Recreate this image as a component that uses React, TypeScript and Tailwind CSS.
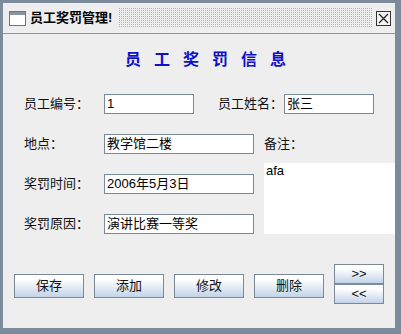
import React from "react";

const font = "font-['Liberation_Sans','Noto_Sans_CJK_SC',sans-serif]";

const Field = ({ value, width }: { value: string; width: string }) => (
  <div
    className={`${width} h-[20px] bg-white border border-[#7a8a99] pl-[2px] text-[13px] leading-[18px] text-black overflow-hidden whitespace-nowrap`}
  >
    {value}
  </div>
);

const Label = ({ text, width }: { text: string; width: string }) => (
  <div className={`${width} h-[20px] text-[13px] leading-[20px] text-[#111]`}>{text}</div>
);

const Btn = ({ text, h = "h-[24px]", w = "w-[70px]" }: { text: string; h?: string; w?: string }) => (
  <div
    className={`${w} ${h} flex items-center justify-center border border-[#7a8a99] bg-gradient-to-b from-white from-20% to-[#c3d3e8] text-[13px] text-[#111]`}
  >
    {text}
  </div>
);

const App = () => {
  return (
    <div className={`w-[401px] h-[334px] bg-[#7b8b9c] pt-[3px] pl-[3px] pr-[6px] pb-[6px] ${font}`}>
      <div className="w-full h-full flex flex-col bg-[#eeeeee]">
        {/* title bar */}
        <div className="h-[31px] flex items-center border-b border-[#8796a8] pl-[6px] pr-[3px]">
          <svg width="17" height="15" viewBox="0 0 17 15" className="mt-[1px]">
            <rect x="0.5" y="0.5" width="16" height="14" fill="#fff" stroke="#6b7583" />
            <rect x="1" y="1" width="15" height="3" fill="#8a95a3" />
          </svg>
          <div className="ml-[4px] text-[13px] font-bold text-black">员工奖罚管理!</div>
          <div className="ml-[6px] flex-1 h-[20px] bg-[conic-gradient(#b4b4b4_25%,transparent_0)] bg-size-[2px_2px]" />
          <div className="ml-[4px] mr-[1px] w-[15px] h-[15px] border-[1.5px] border-[#333] bg-[#f4f4f4] flex items-center justify-center">
            <svg width="11" height="11" viewBox="0 0 11 11">
              <path d="M1 1 L10 10 M10 1 L1 10" stroke="#222" strokeWidth="1.3" />
            </svg>
          </div>
        </div>

        {/* heading */}
        <div className="mt-[16px] h-[20px] pl-[122px] text-[16px] leading-[20px] font-bold text-[#1010cc] tracking-[13px] whitespace-nowrap">
          员工奖罚信息
        </div>

        {/* row 1 */}
        <div className="mt-[24px] flex pl-[21px]">
          <Label text="员工编号：" width="w-[80px]" />
          <Field value="1" width="w-[90px]" />
          <div className="ml-[24px] flex">
            <Label text="员工姓名：" width="w-[66px]" />
            <Field value="张三" width="w-[90px]" />
          </div>
        </div>

        {/* rows 2-4 */}
        <div className="mt-[20px] flex pl-[21px]">
          <div className="flex flex-col gap-[20px]">
            <div className="flex">
              <Label text="地点：" width="w-[80px]" />
              <Field value="教学馆二楼" width="w-[150px]" />
            </div>
            <div className="flex">
              <Label text="奖罚时间：" width="w-[80px]" />
              <Field value="2006年5月3日" width="w-[150px]" />
            </div>
            <div className="flex">
              <Label text="奖罚原因：" width="w-[80px]" />
              <Field value="演讲比赛一等奖" width="w-[150px]" />
            </div>
          </div>
          <div className="ml-[10px] flex flex-col flex-1">
            <Label text="备注：" width="w-[60px]" />
            <div className="mt-[9px] h-[71px] bg-white pl-[2px] text-[13px] leading-[16px] text-black">afa</div>
          </div>
        </div>

        {/* buttons */}
        <div className="mt-[30px] flex items-start pl-[11px]">
          <div className="mt-[10px] flex gap-[10px]">
            <Btn text="保存" />
            <Btn text="添加" />
            <Btn text="修改" />
            <Btn text="删除" />
          </div>
          <div className="ml-[10px] flex flex-col">
            <Btn text=">>" w="w-[50px]" h="h-[20px]" />
            <Btn text="<<" w="w-[50px]" h="h-[20px]" />
          </div>
        </div>
      </div>
    </div>
  );
};

export default App;
